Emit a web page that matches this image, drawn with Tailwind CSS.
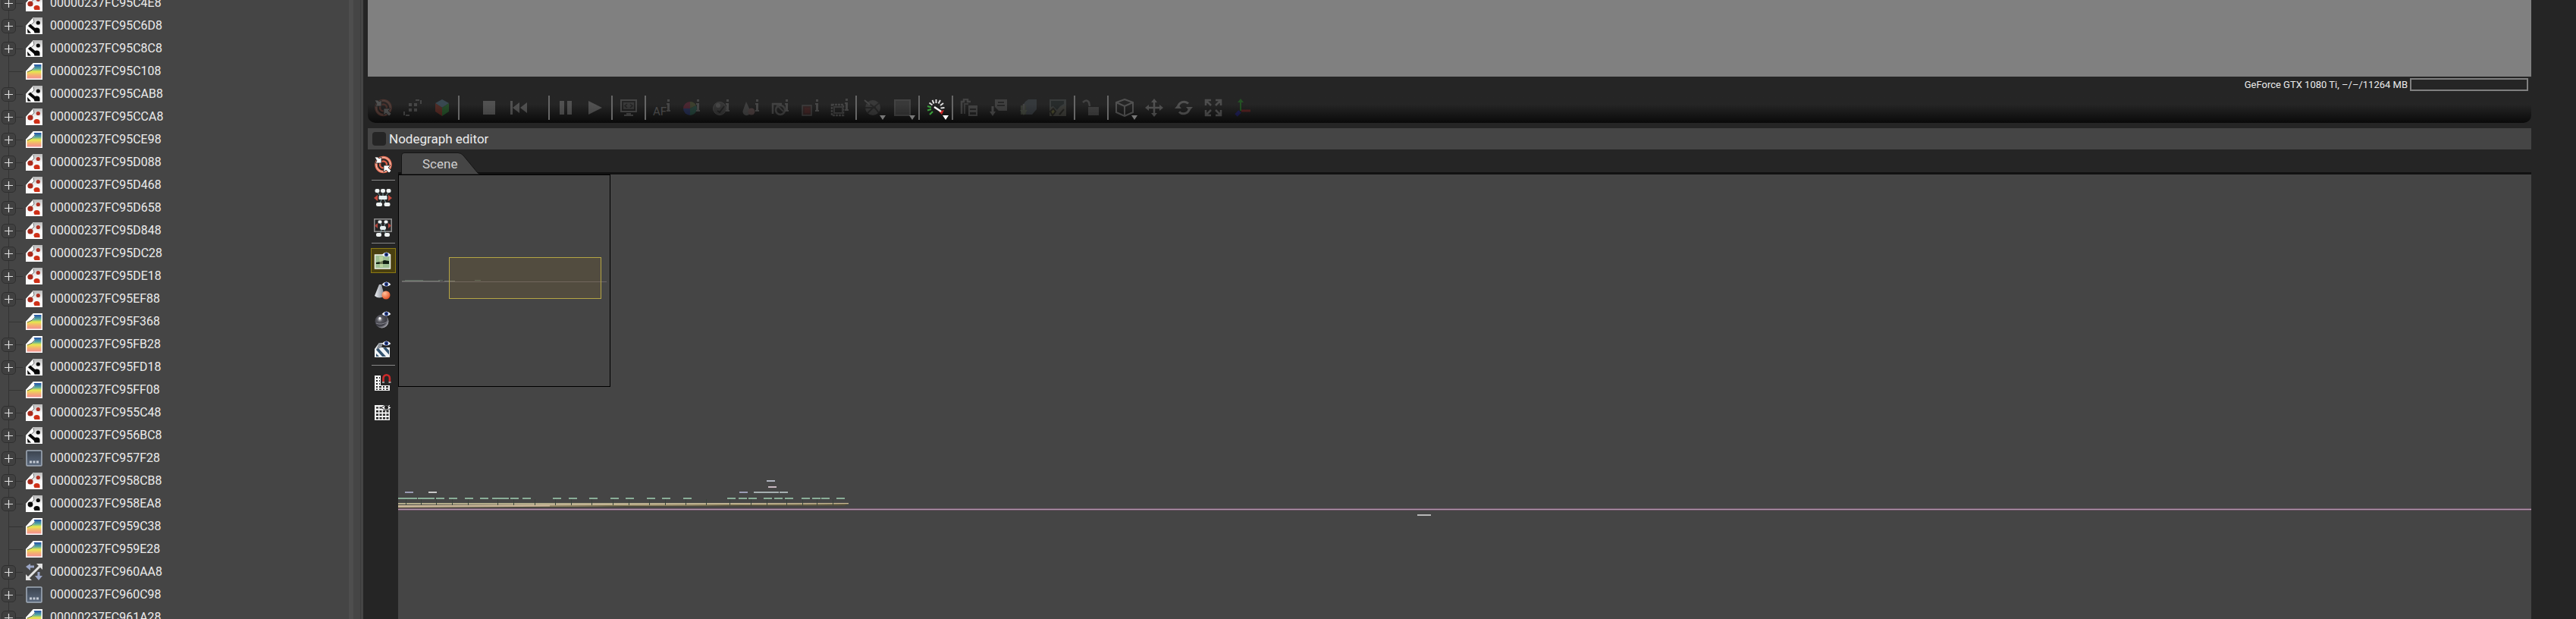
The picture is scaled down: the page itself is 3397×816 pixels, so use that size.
<!DOCTYPE html>
<html lang="en">

<head>
    <meta charset="UTF-8">
    <meta name="viewport" content="width=device-width, initial-scale=1.0">
    <title>Nodegraph editor</title>
    <script src="https://cdn.jsdelivr.net/npm/@tailwindcss/browser@4"></script>
</head>

<body class="flex h-screen overflow-hidden bg-[#252525] font-[Roboto,sans-serif] text-[#ebebeb]">

<!-- icon library -->
<svg class="absolute size-0" aria-hidden="true">
    <defs>
        <linearGradient id="rainbow" x1="0" y1="0" x2="0" y2="1">
            <stop offset="0" stop-color="#2350a8"/>
            <stop offset=".3" stop-color="#55a8a0"/>
            <stop offset=".5" stop-color="#e6e84e"/>
            <stop offset=".75" stop-color="#f5b070"/>
            <stop offset="1" stop-color="#f29090"/>
        </linearGradient>
        <linearGradient id="sheet" x1="0" y1="0" x2="0" y2="1">
            <stop offset="0" stop-color="#b8b8b8"/>
            <stop offset=".5" stop-color="#f4f4f4"/>
            <stop offset="1" stop-color="#fff"/>
        </linearGradient>
        <linearGradient id="slate" x1="0" y1="0" x2="0" y2="1">
            <stop offset="0" stop-color="#3b434e"/>
            <stop offset="1" stop-color="#5c6a7e"/>
        </linearGradient>
        <radialGradient id="ball" cx=".35" cy=".35" r=".7">
            <stop offset="0" stop-color="#c9c9d0"/>
            <stop offset=".3" stop-color="#55555c"/>
            <stop offset=".7" stop-color="#3c3c44"/>
            <stop offset="1" stop-color="#b4b4bc"/>
        </radialGradient>
        <radialGradient id="orange" cx=".35" cy=".3" r=".8">
            <stop offset="0" stop-color="#ffc09a"/>
            <stop offset="1" stop-color="#e0481c"/>
        </radialGradient>
        <linearGradient id="steel" x1="0" x2="1">
            <stop offset="0" stop-color="#eef0f4"/>
            <stop offset="1" stop-color="#80868f"/>
        </linearGradient>
    </defs>

    <!-- tree icons -->
    <symbol id="t-red" viewBox="0 0 22 22">
        <path d="M10 0H22V22H0V11Z" fill="url(#sheet)"/>
        <path d="M10 0L11 6Q8 10 0 11Z" fill="#fff"/>
        <path d="M10 1L11 6Q8 10 3 11" fill="none" stroke="#777"/>
        <circle cx="6" cy="12" r="3.6" fill="#a92a1c"/>
        <circle cx="16.300" cy="6.500" r="2.600" fill="#b03024"/>
        <path d="M10.500 17.500a4 3.600 0 0 1 8 0v2.500h-7z" fill="#cf3018"/>
    </symbol>
    <symbol id="t-black" viewBox="0 0 22 22">
        <path d="M10 0H22V22H0V11Z" fill="url(#sheet)"/>
        <path d="M10 0L11 6Q8 10 0 11Z" fill="#fff"/>
        <path d="M10 1L11 6Q8 10 3 11" fill="none" stroke="#777"/>
        <circle cx="6" cy="12" r="3.400" fill="#080808"/>
        <circle cx="16.300" cy="6.500" r="2.600" fill="#080808"/>
        <path d="M10.500 17.500a4 3.600 0 0 1 8 0v2.500h-7z" fill="#080808"/>
    </symbol>
    <symbol id="t-link" viewBox="0 0 22 22">
        <path d="M10 0H22V22H0V11Z" fill="url(#sheet)"/>
        <path d="M10 0L11 6Q8 10 0 11Z" fill="#fff"/>
        <path d="M10 1L11 6Q8 10 3 11" fill="none" stroke="#777"/>
        <circle cx="16.300" cy="7" r="2.600" fill="#080808"/>
        <path d="M4.500 10L14 18" stroke="#080808" stroke-width="4"/>
        <path d="M2 15Q4 17 7 20.500H2.500z" fill="#080808"/>
        <path d="M10.500 17a4 3.600 0 0 1 8 0v3.500h-7z" fill="#080808"/>
    </symbol>
    <symbol id="t-rainbow" viewBox="0 0 22 22">
        <path d="M10 0H22V22H0V11Z" fill="#fff"/>
        <path d="M10 2H20.500V20.500H1.500V11Z" fill="url(#rainbow)"/>
        <path d="M10 0L12 6Q8 10 0 12V11Z" fill="#fff"/>
        <path d="M12 5Q9 10 2 12" fill="none" stroke="#444" stroke-width=".8"/>
    </symbol>
    <symbol id="t-slate" viewBox="0 0 22 22">
        <rect x="1" y="1" width="20" height="20" rx="1" fill="url(#slate)" stroke="#a3adba" stroke-width="1.500"/>
        <path d="M5 14.500h3v3H5zm4.500 0h3v3h-3zm4.500 0h3v3h-3z" fill="#c3c9d3"/>
    </symbol>
    <symbol id="t-arrows" viewBox="0 0 22 22">
        <path d="M5 4H11M17 11V17" stroke="#9ba6c6" stroke-width="3"/>
        <path d="M0 4L6 0V9ZM12 16H22L17 22Z" fill="#9ba6c6"/>
        <path d="M3 19L19 3" stroke="#e2e2e2" stroke-width="3"/>
        <path d="M14 0H22V8ZM0 14V22H8Z" fill="#e2e2e2"/>
    </symbol>

    <!-- side and top toolbar icons -->
    <symbol id="i-target" viewBox="0 0 24 24">
        <circle cx="12.500" cy="12" r="9.500" fill="none" stroke="#e8735a" stroke-width="3.500"/>
        <circle cx="12.500" cy="12" r="9.500" fill="none" stroke="#f7c4b4" stroke-width="1"/>
        <circle cx="12.500" cy="12" r="4.500" fill="none" stroke="#d9604a" stroke-width="2.500"/>
        <path d="M1 2h4l2 2 3-2v8H2l2-3zM13 13h9l-3 3 4 4-3 3-4-4-3 3z" fill="#fff" stroke="#252525" stroke-width=".8"/>
    </symbol>
    <symbol id="i-spread" viewBox="0 0 24 24">
        <path d="M4 4l6 7M12 4v6M20 4l-6 7M8 19l3-7M16 19l-3-7" stroke="#7fa0a4"/>
        <rect x="1.500" y="0" width="6" height="5" rx="2" fill="#eef2f2"/>
        <rect x="9" y="0" width="6" height="5" rx="2" fill="#eef2f2"/>
        <rect x="16.500" y="0" width="6" height="5" rx="2" fill="#eef2f2"/>
        <rect x="6.500" y="9" width="11" height="5" rx="1" fill="#e6efef"/>
        <rect x="3" y="18" width="8" height="5" rx="2" fill="#eef2f2"/>
        <rect x="13.500" y="18" width="8" height="5" rx="2" fill="#eef2f2"/>
        <path d="M5 8v8l-5-4zM19 8v8l5-4z" fill="#c44a3e"/>
    </symbol>
    <symbol id="i-spread-box" viewBox="0 0 24 24">
        <rect x=".8" y=".8" width="22.400" height="16.400" fill="none" stroke="#999" stroke-width="1.400"/>
        <path d="M8 5l3 6M16 5l-3 6M8 21l3-8M16 21l-3-8" stroke="#7fa0a4"/>
        <rect x="5.500" y="2.500" width="5" height="4" rx="1.500" fill="#eef2f2"/>
        <rect x="13.500" y="2.500" width="5" height="4" rx="1.500" fill="#eef2f2"/>
        <rect x="8" y="10" width="8" height="5" rx="2" fill="#e6efef"/>
        <rect x="3" y="19" width="7" height="5" rx="2" fill="#eef2f2"/>
        <rect x="14" y="19" width="7" height="5" rx="2" fill="#eef2f2"/>
        <path d="M5 6v7l-4-3.500zM19 6v7l4-3.500z" fill="#b0453c"/>
    </symbol>
    <symbol id="i-eye" viewBox="0 0 12 8">
        <path d="M0 4Q6-3 12 4Q6 9 0 4Z" fill="#f2f4fa"/>
        <circle cx="6" cy="3.600" r="2.600" fill="#2a4596"/>
        <circle cx="6" cy="3.600" r="1.200" fill="#0a0f28"/>
    </symbol>
    <symbol id="i-image" viewBox="0 0 24 24">
        <rect x="1.500" y="4" width="20" height="18" fill="#9dbd92" stroke="#eef2ea" stroke-width="1.500"/>
        <path d="M3 14l6 -1 5-2 6 1v4H3z" fill="#111d12"/>
        <path d="M7 6h5v14H8z" fill="#dbe8a8" opacity=".45"/>
        <use href="#i-eye" x="10.500" y="0" width="12" height="8"/>
    </symbol>
    <symbol id="i-shapes" viewBox="0 0 24 24">
        <path d="M7 4h3l4 15Q7 24 1 19z" fill="url(#steel)"/>
        <circle cx="16" cy="18" r="5.500" fill="url(#orange)"/>
        <use href="#i-eye" x="10.500" y="0" width="12" height="8"/>
    </symbol>
    <symbol id="i-sphere" viewBox="0 0 24 24">
        <circle cx="10.500" cy="13.500" r="9" fill="url(#ball)"/>
        <path d="M3 16q7 3 15-2" stroke="#85858e" fill="none"/>
        <circle cx="8" cy="9.500" r="1.500" fill="#fff"/>
        <use href="#i-eye" x="10.500" y="0" width="12" height="8"/>
    </symbol>
    <symbol id="i-stripes" viewBox="0 0 24 24">
        <path d="M7 3h4l-1 6h11v13H1V11Z" fill="#f2f5f8"/>
        <path d="M7 3l4 1-1 5-7 3z" fill="#8b9098"/>
        <path d="M3 12l8 9h5L6 10zM12 9.500l8 9V13l-4-4zM3 17v4h4z" fill="#33536f"/>
        <use href="#i-eye" x="10.500" y="0" width="12" height="8"/>
    </symbol>
    <symbol id="i-snap" viewBox="0 0 24 24">
        <path d="M1 2h8v13h12v7H1z" fill="#f2f2f2"/>
        <path d="M3 4h2v2H3zm4 0h1v2H7zM3 8h2v2H3zm4 0h1v2H7zM3 12h2v2H3zm4 0h1v2H7zM3 16h2v2H3zm4 0h3v2H7zm5 0h2v2h-2zm4 0h3v2h-3zM3 19.500h2v1.500H3zm4 0h3v1.500H7zm5 0h2v1.500h-2zm4 0h3v1.500h-3z" fill="#252525"/>
        <path d="M12.500 11V5.500a4.200 4.200 0 0 1 8.400 0V11" fill="none" stroke="#cc2a2a" stroke-width="2.600"/>
        <path d="M11 10h3v2h-3zM19.500 10h3v2h-3z" fill="#999"/>
    </symbol>
    <symbol id="i-grid" viewBox="0 0 24 24">
        <path d="M1 2h20v20H1z" fill="#f2f2f2"/>
        <path d="M3 4.500h3v2H3zm4.500 0h3v2h-3zM3 9h3v2.500H3zm4.500 0h3v2.500h-3zm4.500 0h3v2.500h-3zm4.500 0h3v2.500h-3zM3 13.500h3V16H3zm4.500 0h3V16h-3zm4.500 0h3V16h-3zm4.500 0h3V16h-3zM3 18h3v2.500H3zm4.500 0h3v2.500h-3zm4.500 0h3v2.500h-3zm4.500 0h3v2.500h-3z" fill="#252525"/>
        <path d="M10 5.500q6.500-7 13 0-6.500 6-13 0z" fill="#eee" stroke="#252525"/>
        <circle cx="16.500" cy="5" r="2.500" fill="#222"/>
    </symbol>
    <symbol id="i-fit" viewBox="0 0 24 24">
        <path d="M16 2h7v7M8 22H1v-7" fill="none" stroke="#ccc" stroke-width="2" stroke-dasharray="5 2"/>
        <path d="M7 6h4v4H7zm7 0h4v4h-4zM7 13h4v4H7zm7 0h4v4h-4z" fill="#ccc"/>
    </symbol>
    <symbol id="i-cube-color" viewBox="0 0 24 24">
        <path d="M12 1l9 5-9 6-9-6z" fill="#8cd2ff"/>
        <path d="M3 6l9 6v11l-9-6z" fill="#ff4c30"/>
        <path d="M21 6l-9 6v11l9-6z" fill="#35e548"/>
    </symbol>
    <symbol id="i-stop" viewBox="0 0 24 24"><path d="M4 3h16v18H4z" fill="#fff"/></symbol>
    <symbol id="i-rewind" viewBox="0 0 24 24">
        <path d="M1 3h3v18H1zM13 5v14l-9-7zM23 5v14l-9-7z" fill="#fff"/>
    </symbol>
    <symbol id="i-pause" viewBox="0 0 24 24"><path d="M4 3h6v18H4zM14 3h6v18h-6z" fill="#fff"/></symbol>
    <symbol id="i-play" viewBox="0 0 24 24"><path d="M3 3l18 9-18 9z" fill="#fff"/></symbol>
    <symbol id="i-monitor" viewBox="0 0 24 24">
        <path d="M2 2h20v15H2z" fill="none" stroke="#ccc" stroke-width="2"/>
        <path d="M5 5h14v9H5z" fill="#888"/>
        <path d="M10 7l-3 2.500 3 2.500M14 7l3 2.500-3 2.500" fill="none" stroke="#222" stroke-width="1.500"/>
        <path d="M9 19h6v2h3v2H6v-2h3z" fill="#ccc"/>
    </symbol>
    <symbol id="i-i" viewBox="0 0 6 18">
        <path d="M2 0h3v3H2zM1 5h4v9h1v2H1v-2h1V7H1z" fill="#ccc"/>
    </symbol>
    <symbol id="i-af" viewBox="0 0 24 24">
        <text x="0" y="22" font-family="Roboto" font-size="15" fill="#eee">AF</text>
        <use href="#i-i" x="17" y="1" width="6" height="18"/>
    </symbol>
    <symbol id="i-wheel" viewBox="0 0 24 24">
        <path d="M10 13V4a9 9 0 0 1 8 5z" fill="#9a5"/>
        <path d="M10 13L18 9a9 9 0 0 1-8 13z" fill="#3a8"/>
        <path d="M10 13v9a9 9 0 0 1-9-9z" fill="#35d"/>
        <path d="M10 13H1a9 9 0 0 1 9-9z" fill="#d36"/>
        <use href="#i-i" x="17" y="1" width="6" height="18"/>
    </symbol>
    <symbol id="i-orb" viewBox="0 0 24 24">
        <circle cx="10" cy="13" r="8.500" fill="#777" stroke="#aaa"/>
        <circle cx="8" cy="9" r="3" fill="#ccc"/>
        <path d="M7 16l3 2 6-8" fill="none" stroke="#222" stroke-width="2"/>
        <use href="#i-i" x="17" y="1" width="6" height="18"/>
    </symbol>
    <symbol id="i-drops" viewBox="0 0 24 24">
        <path d="M6 4l5 11a5 5 0 1 1-9 0z" fill="#aaa"/>
        <circle cx="13" cy="17" r="4.500" fill="#c99"/>
        <use href="#i-i" x="17" y="1" width="6" height="18"/>
    </symbol>
    <symbol id="i-lens" viewBox="0 0 24 24">
        <path d="M2 20V7h12" fill="none" stroke="#bbb" stroke-width="2.500"/>
        <circle cx="12" cy="15" r="6" fill="none" stroke="#aaa" stroke-width="2.500"/>
        <path d="M7 8l9 9" stroke="#999" stroke-width="2"/>
        <use href="#i-i" x="17" y="1" width="6" height="18"/>
    </symbol>
    <symbol id="i-region" viewBox="0 0 24 24">
        <path d="M2 9h12v13H2z" fill="#733" stroke="#aaa" stroke-width="1.500"/>
        <path d="M5 12h7v7H5z" fill="#a33"/>
        <use href="#i-i" x="18" y="1" width="6" height="18"/>
    </symbol>
    <symbol id="i-film" viewBox="0 0 24 24">
        <path d="M2 8h15v14H2z" fill="none" stroke="#bbb" stroke-width="2.500" stroke-dasharray="3 1"/>
        <path d="M5 11h11v8H5z" fill="none" stroke="#999" stroke-width="2"/>
        <use href="#i-i" x="18" y="0" width="6" height="18"/>
    </symbol>
    <symbol id="i-globe" viewBox="0 0 24 24">
        <circle cx="12" cy="12" r="10" fill="#888"/>
        <path d="M4 6q9 2 16 13M5 19Q12 12 20 6M2 12h14" fill="none" stroke="#333" stroke-width="2"/>
        <path d="M1 2l7 6" stroke="#ccc" stroke-width="2"/>
    </symbol>
    <symbol id="i-panel" viewBox="0 0 24 24">
        <path d="M2 2h20v20H2z" fill="#888" stroke="#bbb" stroke-width="2"/>
    </symbol>
    <symbol id="i-gauge" viewBox="0 0 24 24">
        <path d="M12.500 1v5M7.500 2l2 4.500M18 2l-2.500 4.500M3.500 5.500l4 3M22 6l-4 3M23.500 12l-5 .5" stroke="#ddd" stroke-width="2"/>
        <path d="M1 10l5 1.500M1 15.500l5-1.500M4 21l4-4" stroke="#3a9e3a" stroke-width="2.200"/>
        <path d="M16 17l4 4 3-6z" fill="#c22"/>
        <path d="M10 11l9 6" stroke="#fff" stroke-width="2.500"/>
    </symbol>
    <symbol id="i-copy" viewBox="0 0 24 24">
        <path d="M2 20V4h3V1h5v3h4" fill="none" stroke="#bbb" stroke-width="2.500"/>
        <path d="M6 20V7h5" fill="none" stroke="#999" stroke-width="2"/>
        <path d="M11 9h12v14H11z" fill="#bbb"/>
        <path d="M13 13h8v2h-8zM13 18h8v3h-8z" fill="#333"/>
    </symbol>
    <symbol id="i-export" viewBox="0 0 24 24">
        <path d="M7 1h16v15H12l-5-5z" fill="#aaa"/>
        <path d="M11 5h8M10 9h10" stroke="#333" stroke-width="2"/>
        <path d="M4 10v8" stroke="#ccc" stroke-width="3"/>
        <path d="M0 17h8l-4 6z" fill="#ccc"/>
    </symbol>
    <symbol id="i-layers" viewBox="0 0 24 24">
        <path d="M8 4l4-3h11v13l-6 7H6V7z" fill="#789"/>
        <path d="M2 9h7v12H2z" fill="#897"/>
        <path d="M6 7v9" stroke="#bbb" stroke-width="2.500"/>
        <path d="M1 15h10l-5 7z" fill="#ab9"/>
    </symbol>
    <symbol id="i-terrain" viewBox="0 0 24 24">
        <path d="M1 1h22v22H1z" fill="#8a9a9a"/>
        <path d="M3 3h17v4l-5 3-4 5-5-5-3 1z" fill="#344"/>
        <path d="M1 12q5-3 9 4l5-5 8-2v14H1z" fill="#998"/>
        <path d="M2 17l4-4 3 4-4 5zM14 21l6-7" stroke="#332" stroke-width="2" fill="#cc5"/>
    </symbol>
    <symbol id="i-unlock" viewBox="0 0 24 24">
        <path d="M1 5q5-5 8 0l1 5" fill="none" stroke="#bbb" stroke-width="2.500"/>
        <path d="M8 11h14v11H8z" fill="#aaa"/>
    </symbol>
    <symbol id="i-cube" viewBox="0 0 24 24">
        <path d="M12 1l11 4v13l-11 5-11-5V5zM1 5l11 5 11-5M12 10v13" fill="none" stroke="#fff" stroke-width="2"/>
    </symbol>
    <symbol id="i-move" viewBox="0 0 24 24">
        <path d="M12 4v16M4 12h16" stroke="#fff" stroke-width="2.500"/>
        <path d="M12 0l4 5H8zM12 24l4-5H8zM0 12l5-4v8zM24 12l-5-4v8z" fill="#fff"/>
    </symbol>
    <symbol id="i-rotate" viewBox="0 0 24 24">
        <path d="M4.500 11A8 8 0 0 1 18 6.500M19.500 13A8 8 0 0 1 6 17.500" fill="none" stroke="#fff" stroke-width="3"/>
        <path d="M0 13h9l-4.500-5zM15 11h9l-4.500 5z" fill="#fff"/>
    </symbol>
    <symbol id="i-expand" viewBox="0 0 24 24">
        <path d="M2 9V2h7M15 2h7v7M22 15v7h-7M9 22H2v-7M2 2l7 7M22 2l-7 7M22 22l-7-7M2 22l7-7" fill="none" stroke="#eee" stroke-width="2.500"/>
    </symbol>
    <symbol id="i-axis" viewBox="0 0 24 24">
        <path d="M9 4v12" stroke="#2f2" stroke-width="2"/>
        <path d="M5 5h8L9 0z" fill="#2f2"/>
        <path d="M10 16h12" stroke="#f22" stroke-width="3"/>
        <path d="M8 17l-5 5" stroke="#22f" stroke-width="5"/>
    </symbol>
</svg>

<!-- scene tree -->
<aside class="flex w-[479px] shrink-0 bg-[#454545]">
    <ul id="tree" class="-mt-[11px] flex-1"></ul>
    <div class="mr-[9px] w-[6px] bg-[#4e4e4e]"></div>
    <div class="w-[4px] border-l border-[#3c3c3c]"></div>
</aside>

<main class="ml-[6px] mr-[59px] flex min-w-0 flex-1 flex-col">
    <!-- render view -->
    <section class="h-[101px] shrink-0 bg-[#808080]"></section>

    <!-- gpu memory -->
    <div class="flex h-[21px] shrink-0 items-center justify-end gap-[3px] pr-1">
        <span class="text-[13px] leading-[20px]">GeForce GTX 1080 Ti, –/–/11264 MB</span>
        <div role="meter" aria-label="GPU memory" aria-valuemin="0" aria-valuemax="11264" aria-valuenow="0" class="h-[17px] w-[156px] border-2 border-[#808080]"></div>
    </div>

    <!-- render toolbar -->
    <div id="toolbar" class="mb-[7px] flex h-[40px] shrink-0 items-center rounded-b-[10px] bg-linear-to-b from-[#252525] from-40% to-[#0a0a0a]"></div>

    <!-- panel title -->
    <label class="flex h-[28px] shrink-0 items-center gap-1 bg-[#454545] pl-[6px] text-[17px] leading-[24px]">
        <input type="checkbox" class="size-[18px] appearance-none rounded-[4px] bg-[#252525]">
        Nodegraph editor
    </label>

    <div class="flex min-h-0 flex-1">
        <div id="sidebar" class="flex w-[40px] shrink-0 flex-col items-center"></div>

        <div class="flex min-w-0 flex-1 flex-col">
            <div class="flex h-[33px] shrink-0 border-b-3 border-[#111] pl-1 pt-1">
                <button class="relative h-[29px] w-[104px] pl-[28px] text-left text-[17px] leading-[28px] text-[#cfcfcf]">
                    <svg class="absolute inset-0 h-[29px] w-[104px]" viewBox="0 0 104 29">
                        <path d="M.5 29V4Q.5 .5 4 .5H75Q79 .5 82 4L101 27Q102 28 104 28.500V29Z" fill="#454545" stroke="#151515"/>
                    </svg>
                    <span class="relative">Scene</span>
                </button>
            </div>

            <!-- node canvas -->
            <div class="relative flex-1 bg-[#454545]">
                <svg id="graph" class="absolute inset-0 h-full w-full"></svg>

                <!-- navigator -->
                <div class="absolute left-0 top-0 h-[280px] w-[280px] border border-black bg-[#454545]">
                    <svg class="absolute inset-0 h-full w-full">
                        <path d="M4 139.500h50M60 139.500h14" stroke="#777d74"/>
                        <path d="M4 140.500h270" stroke="#6a6468"/>
                        <path d="M8 138.500h24M52 138.500h6M100 138.500h8" stroke="#606a62"/>
                    </svg>
                    <div class="absolute left-[66px] top-[108px] h-[55px] w-[201px] border border-[#b5a545] bg-[#a07a20]/15"></div>
                </div>
            </div>
        </div>
    </div>
</main>

<script>
    // [name, icon, expandable]
    const items = [
        ['00000237FC95C4E8', 't-red', true],
        ['00000237FC95C6D8', 't-link', true],
        ['00000237FC95C8C8', 't-link', true],
        ['00000237FC95C108', 't-rainbow', false],
        ['00000237FC95CAB8', 't-link', true],
        ['00000237FC95CCA8', 't-red', true],
        ['00000237FC95CE98', 't-rainbow', true],
        ['00000237FC95D088', 't-red', true],
        ['00000237FC95D468', 't-red', true],
        ['00000237FC95D658', 't-red', true],
        ['00000237FC95D848', 't-red', true],
        ['00000237FC95DC28', 't-red', true],
        ['00000237FC95DE18', 't-red', true],
        ['00000237FC95EF88', 't-red', true],
        ['00000237FC95F368', 't-rainbow', false],
        ['00000237FC95FB28', 't-rainbow', true],
        ['00000237FC95FD18', 't-link', true],
        ['00000237FC95FF08', 't-rainbow', false],
        ['00000237FC955C48', 't-red', true],
        ['00000237FC956BC8', 't-link', true],
        ['00000237FC957F28', 't-slate', true],
        ['00000237FC958CB8', 't-red', true],
        ['00000237FC958EA8', 't-black', true],
        ['00000237FC959C38', 't-rainbow', false],
        ['00000237FC959E28', 't-rainbow', false],
        ['00000237FC960AA8', 't-arrows', true],
        ['00000237FC960C98', 't-slate', true],
        ['00000237FC961A28', 't-rainbow', true],
    ];

    const expander = `
        <button aria-label="Expand" class="flex size-[19px] items-center justify-center rounded-[5px] border border-[#303030] bg-[#404040]">
            <svg class="size-[11px]" viewBox="0 0 11 11"><path d="M5.500 0v11M0 5.500h11" stroke="#e0e0e0" stroke-width="1.200"/></svg>
        </button>
        <span class="h-px w-[9px] bg-[#333]"></span>`;
    const leaf = `
        <span class="h-[30px] w-[10px] border-r border-[#333]"></span>
        <span class="h-px w-[18px] bg-[#333]"></span>`;

    document.getElementById('tree').innerHTML = items.map(([name, icon, open]) => `
        <li class="flex h-[30px] items-center">
            <div class="flex h-[30px] w-[34px] items-center pl-[2px] ${open ? 'bg-[linear-gradient(#333,#333)] bg-[length:1px_30px] bg-[position:11px_0] bg-no-repeat' : ''}">${open ? expander : leaf}</div>
            <svg class="size-[22px]"><use href="#${icon}"/></svg>
            <span class="ml-[10px] text-[16px] leading-[20px]">${name}</span>
        </li>`).join('');

    // '|' is a separator, '_' is a spacer
    const tools = [
        'target', 'fit', 'cube-color', '|', '_', 'stop', 'rewind', '_', '|', 'pause', 'play', '|', 'monitor', '|',
        'af', 'wheel', 'orb', 'drops', 'lens', 'region', 'film', '|', 'globe', 'panel', '|', 'gauge', '|',
        'copy', 'export', 'layers', 'terrain', '|', 'unlock', '|', 'cube', 'move', 'rotate', 'expand', 'axis',
    ];
    const menus = ['globe', 'panel', 'gauge', 'cube'];

    document.getElementById('toolbar').innerHTML = tools.map((t) => {
        if (t === '|') return '<span class="ml-[2px] mr-[1px] h-[32px] w-[2px] bg-[#666]"></span>';
        if (t === '_') return '<span class="w-[18px]"></span>';
        const on = t === 'gauge';
        const arrow = menus.includes(t)
            ? `<svg class="absolute right-[2px] bottom-[4px] h-[6px] w-[8px] ${on ? 'text-white' : 'text-[#777]'}" viewBox="0 0 8 6"><path d="M0 0h8L4 6z" fill="currentColor"/></svg>`
            : '';
        return `<button aria-label="${t}" ${on ? '' : 'disabled'} class="relative flex h-[40px] w-[39px] items-center justify-center">
            <svg class="size-[24px] ${on ? '' : 'opacity-20'}"><use href="#i-${t}"/></svg>${arrow}
        </button>`;
    }).join('');

    const side = ['target', '|', 'spread', 'spread-box', '|', 'image', 'shapes', 'sphere', 'stripes', '|', 'snap', 'grid'];
    document.getElementById('sidebar').innerHTML = side.map((t) => {
        if (t === '|') return '<span class="mt-[1px] mb-[3px] h-px w-[31px] shrink-0 bg-[#888]"></span>';
        return `<div class="flex h-[39px] shrink-0 items-center">
            <button aria-label="${t}" class="flex size-[33px] items-center justify-center border ${t === 'image' ? 'border-[#8c7a12] bg-[#4a4010]' : 'border-transparent'}">
                <svg class="size-[24px]"><use href="#i-${t}"/></svg>
            </button>
        </div>`;
    }).join('');

    // node graph, x is the centre of each node
    const green = [-3, 8, 19, 31, 42, 55, 72, 93, 113, 129, 140, 153, 169, 209, 230, 257, 285, 305, 333, 353, 381,
        439, 454, 467, 487, 501, 515, 537, 551, 563, 583];
    const light = [
        [14, 418, '#9a9cb4'], [45, 418, '#c8c8c8'], [455, 418, '#9a9cb4'], [474, 418, '#a4aeb0'], [485, 418, '#a4aeb0'],
        [496, 418, '#a4aeb0'], [508, 418, '#a4aeb0'], [493, 411, '#c8b8c0'], [491, 403, '#b0b4c0'],
    ];
    const ticks = [10, 30, 50, 71, 92, 131, 152, 180, 207, 228, 255, 283, 304, 331, 352, 379, 406, 437, 465, 486, 512, 533, 552, 573];
    const node = (x, y, w, c) => `<rect x="${x}" y="${y}" width="${w}" height="2" fill="${c}"/>`;

    document.getElementById('graph').innerHTML = [
        '<path d="M0 436L590 434V437L0 440Z" fill="#4f4a3c"/>',
        '<rect x="0" y="433" width="594" height="2" fill="#b3ac8b"/>',
        '<path d="M0 436L594 433V435L300 437L0 439Z" fill="#c8b596"/>',
        '<path d="M200 437L594 434.500" stroke="#75704a"/>',
        ...ticks.map((x) => `<rect x="${x}" y="428" width="1" height="8" fill="#38423a"/>`),
        ...green.map((x) => node(x - 5, 426, 11, '#8aae98')),
        ...light.map(([x, y, c]) => node(x - 5, y, 11, c)),
        '<rect x="0" y="440" width="100%" height="3" fill="#6f5468"/>',
        '<rect x="0" y="441" width="100%" height="1" fill="#b39ab0"/>',
        node(1344, 448, 18, '#b8b8b8'),
    ].join('');
</script>

</body>

</html>
